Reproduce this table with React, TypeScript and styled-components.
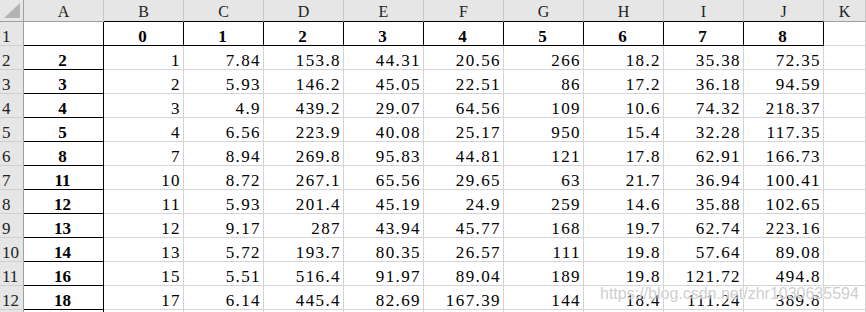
import React from 'react'
import styled, { createGlobalStyle } from 'styled-components'

const GlobalStyle = createGlobalStyle`
  html, body {
    margin: 0;
    padding: 0;
    background: #ffffff;
    overflow: hidden;
  }
`

const Sheet = styled.div`
  position: relative;
  width: 866px;
  height: 312px;
  overflow: hidden;
  display: grid;
  grid-template-columns: 24px repeat(10, 80px) 1fr;
  grid-auto-rows: 24px;
  grid-template-rows: 22px;
  font-family: 'Liberation Serif', 'Times New Roman', serif;
  color: #000;
`

const Corner = styled.div`
  position: relative;
  box-sizing: border-box;
  background: #e6e6e6;
  border-right: 1px solid #9f9f9f;
  border-bottom: 1px solid #9f9f9f;

  &::after {
    content: '';
    position: absolute;
    left: 4px;
    top: 3px;
    width: 0;
    height: 0;
    border-left: 16px solid transparent;
    border-bottom: 15px solid #b4b4b4;
  }
`

const ColHead = styled.div<{ $dark?: boolean }>`
  box-sizing: border-box;
  background: #e6e6e6;
  border-right: 1px solid #c8c8c8;
  border-bottom: 1px solid ${({ $dark }) => ($dark ? '#000' : '#9f9f9f')};
  text-align: center;
  font-size: 16px;
  line-height: 16px;
  padding-top: 4px;
  color: #222;
  white-space: nowrap;
  overflow: hidden;
`

const RowHead = styled.div`
  box-sizing: border-box;
  background: #e6e6e6;
  border-right: 1px solid #9f9f9f;
  border-bottom: 1px solid #cfcfcf;
  font-size: 17px;
  line-height: 17px;
  padding: 6px 0 0 2px;
  color: #222;
  white-space: nowrap;
`

const Cell = styled.div<{ $right?: boolean; $bottom?: boolean; $bold?: boolean; $center?: boolean }>`
  box-sizing: border-box;
  border-right: 1px solid ${({ $right }) => ($right ? '#000' : '#d4d4d4')};
  border-bottom: 1px solid ${({ $bottom }) => ($bottom ? '#000' : '#d4d4d4')};
  font-size: 17px;
  line-height: 17px;
  padding: 6px 2px 0 0;
  text-align: ${({ $center }) => ($center ? 'center' : 'right')};
  font-weight: ${({ $bold }) => ($bold ? 700 : 400)};
  letter-spacing: ${({ $bold }) => ($bold ? '0' : '1.4px')};
  white-space: nowrap;
  overflow: hidden;
`

const Watermark = styled.div`
  position: absolute;
  left: 600px;
  top: 285px;
  font-family: 'Liberation Sans', Arial, sans-serif;
  font-size: 16px;
  color: rgba(190, 190, 190, 0.75);
  text-shadow: 0 0 1px #fff, 0 0 2px rgba(255, 255, 255, 0.8);
  white-space: nowrap;
  pointer-events: none;
`

const LETTERS = ['A', 'B', 'C', 'D', 'E', 'F', 'G', 'H', 'I', 'J', 'K']

const ROWS: string[][] = [
  ['2', '1', '7.84', '153.8', '44.31', '20.56', '266', '18.2', '35.38', '72.35'],
  ['3', '2', '5.93', '146.2', '45.05', '22.51', '86', '17.2', '36.18', '94.59'],
  ['4', '3', '4.9', '439.2', '29.07', '64.56', '109', '10.6', '74.32', '218.37'],
  ['5', '4', '6.56', '223.9', '40.08', '25.17', '950', '15.4', '32.28', '117.35'],
  ['8', '7', '8.94', '269.8', '95.83', '44.81', '121', '17.8', '62.91', '166.73'],
  ['11', '10', '8.72', '267.1', '65.56', '29.65', '63', '21.7', '36.94', '100.41'],
  ['12', '11', '5.93', '201.4', '45.19', '24.9', '259', '14.6', '35.88', '102.65'],
  ['13', '12', '9.17', '287', '43.94', '45.77', '168', '19.7', '62.74', '223.16'],
  ['14', '13', '5.72', '193.7', '80.35', '26.57', '111', '19.8', '57.64', '89.08'],
  ['16', '15', '5.51', '516.4', '91.97', '89.04', '189', '19.8', '121.72', '494.8'],
  ['18', '17', '6.14', '445.4', '82.69', '167.39', '144', '18.4', '111.24', '389.8'],
]

export default function App() {
  return (
    <>
      <GlobalStyle />
      <Sheet>
        <Corner />
        {LETTERS.map((l, i) => (
          <ColHead key={l} $dark={i >= 1 && i <= 9}>
            {l}
          </ColHead>
        ))}

        <RowHead>1</RowHead>
        <Cell $right $bottom />
        {Array.from({ length: 9 }, (_, i) => (
          <Cell key={i} $right $bottom $bold $center>
            {i}
          </Cell>
        ))}
        <Cell />

        {ROWS.map((row, r) => (
          <React.Fragment key={r}>
            <RowHead>{r + 2}</RowHead>
            <Cell $right $bottom $bold $center>
              {row[0]}
            </Cell>
            {row.slice(1).map((v, c) => (
              <Cell key={c}>{v}</Cell>
            ))}
            <Cell />
          </React.Fragment>
        ))}

        {/* row 13 is only 2px in view, its label falls below the edge */}
        <RowHead />
        <Cell $right />
        {Array.from({ length: 10 }, (_, i) => (
          <Cell key={i} />
        ))}

        <Watermark>https://blog.csdn.net/zhr1030635594</Watermark>
      </Sheet>
    </>
  )
}
